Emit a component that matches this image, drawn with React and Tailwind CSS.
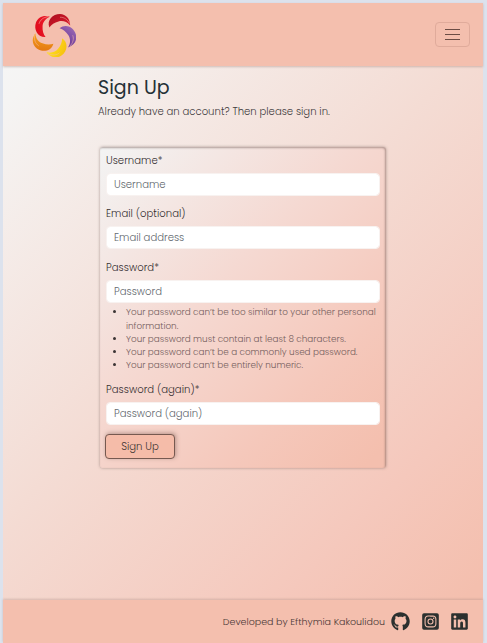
import React from 'react';
import { FaGithub, FaLinkedin, FaInstagramSquare } from 'react-icons/fa';

const petals = [
  { angle: 0, id: 'crimson', from: '#a80f20', to: '#e01b2c' },
  { angle: 72, id: 'violet', from: '#a070b8', to: '#653092' },
  { angle: 144, id: 'yellow', from: '#f5b80c', to: '#ffe820' },
  { angle: 216, id: 'orange', from: '#e06f10', to: '#f6a51c' },
  { angle: 288, id: 'red', from: '#dc0618', to: '#f02030' },
];

function Logo() {
  return (
    <svg viewBox="0 0 44 44" className="h-11 w-11">
      <defs>
        {petals.map((p) => (
          <linearGradient key={p.id} id={p.id} x1="0" y1="0" x2="1" y2="1">
            <stop offset="0" stopColor={p.from} />
            <stop offset="1" stopColor={p.to} />
          </linearGradient>
        ))}
      </defs>
      {petals.map((p) => (
        <g key={p.id} transform={`rotate(${p.angle} 22 22)`}>
          <path d="M17.4 14.6C14.5 7 21 .9 28 1C34 1.2 38 5.5 38.2 12.5C34.8 8.4 30.5 7.4 26.5 8.5C22.5 9.6 19.4 11.6 17.4 14.6Z" fill={`url(#${p.id})`} />
          <path d="M28 4.3C32 4 35.5 6.5 37.6 10.5" fill="none" stroke="#f5bca9" strokeWidth=".5" />
        </g>
      ))}
    </svg>
  );
}

function Field({ label, placeholder, className }) {
  return (
    <label className={`block ${className}`}>
      <span className="block h-[18px] text-[10.1px] leading-[18px] tracking-[0.02px] whitespace-nowrap text-[#352f31]">{label}</span>
      <input
        placeholder={placeholder}
        className="mt-[3px] block h-[23px] w-full rounded-[4px] border border-[#f8f2f0] bg-white bg-clip-padding px-[7px] text-[10.1px] leading-[21px] outline-none placeholder:text-[#62686e]"
      />
    </label>
  );
}

export default function App() {
  return (
    <div className="h-[643px] w-[487px] overflow-hidden bg-[#dce2ed] pt-[3px] pr-1 pl-[3px] font-['Poppins','Inter',sans-serif] font-light">
      <div className="flex h-[640px] flex-col bg-[#f4bfae]">
        <header className="relative flex h-[63px] shrink-0 items-center justify-between bg-[#f4bfae] pr-[13px] pl-[29px] shadow-[0_1px_2px_#a58a8277]">
          <Logo />
          <button aria-label="Menu" className="flex h-[25px] w-[35px] flex-col items-center justify-center gap-1 rounded-[4px] border border-[#e0ab9b]">
            <span className="h-px w-[15px] bg-[#6b4c44]" />
            <span className="h-px w-[15px] bg-[#6b4c44]" />
            <span className="h-px w-[15px] bg-[#6b4c44]" />
          </button>
        </header>

        <main className="flex-1 bg-[linear-gradient(135deg,#f5f5f5_0%,#f5f4f3_4%,#f4dcd4_45%,#f5c8bc_80%,#f4bfae_98%)] pt-2 pl-[95px]">
          <h1 className="h-[27px] text-[19px] leading-[27px] font-normal text-[#253136]">Sign Up</h1>
          <p className="mt-[2px] h-[18px] text-[10.1px] leading-[18px] whitespace-nowrap text-[#423c3e]">
            Already have an account? Then please sign in.
          </p>
          <form className="mt-[26px] ml-[2px] h-[321px] w-[286px] rounded-[3px] bg-[linear-gradient(135deg,#f3f4f4_0%,#f5d9d2_42%,#f5c8bb_74%,#f4bfae_96%)] px-[6px] pt-[5px] shadow-[0_0_3px_#765f5a99,inset_-1px_1px_2px_#765f5a88]">
            <Field label="Username*" placeholder="Username" className="h-[53px]" />
            <Field label="Email (optional)" placeholder="Email address" className="h-[54px]" />
            <Field label="Password*" placeholder="Password" className="h-[44px]" />
            <ul className="mt-[2px] h-[76px] list-disc pl-[20px] text-[8.82px] leading-[13px] whitespace-nowrap text-[#75605e] marker:text-[#3b3434]">
              <li className="leading-[14px]">Your password can’t be too similar to your other personal<br />information.</li>
              <li>Your password must contain at least 8 characters.</li>
              <li>Your password can’t be a commonly used password.</li>
              <li>Your password can’t be entirely numeric.</li>
            </ul>
            <Field label="Password (again)*" placeholder="Password (again)" className="h-[45px]" />
            <button type="button" className="mt-[8px] -ml-px block h-[25px] w-[70px] rounded-[4px] border border-[#765950] bg-[#f5bca9] text-[10.1px] text-[#403433] shadow-[1px_-1px_4px_#805e5588]">Sign Up</button>
          </form>
        </main>

        <footer className="relative flex h-[43px] shrink-0 items-center justify-end bg-[#f4bfae] pr-[14px] text-[#2b302f] shadow-[0_-1px_2px_#a58a8266]">
          <span className="mt-[2px] mr-[6px] text-[9.5px] whitespace-nowrap text-[#4a3837]">Developed by Efthymia Kakoulidou</span>
          <FaGithub className="mr-[11px] h-[19px] w-[19px]" />
          <FaInstagramSquare className="mr-[10px] h-[19px] w-[19px]" />
          <FaLinkedin className="h-[19px] w-[19px]" />
        </footer>
      </div>
    </div>
  );
}
